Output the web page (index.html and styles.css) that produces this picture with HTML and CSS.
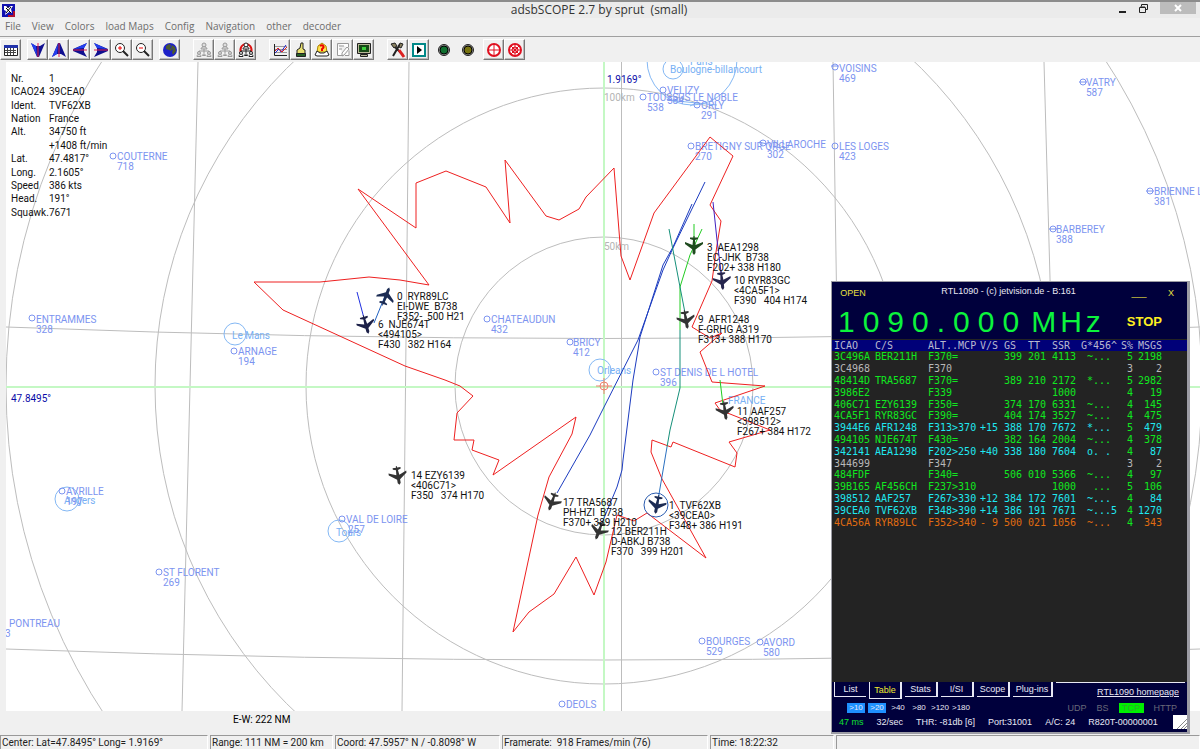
FILE: index.html
```
<!DOCTYPE html>
<html lang="en">
 <head>
  <meta charset="utf-8">
  <title>adsbSCOPE 2.7 by sprut  (small)</title>
  <meta name="viewport" content="width=device-width, initial-scale=1.0">
  <link rel="stylesheet" href="styles.css">
 </head>

<body>

<header>
  <div class="titlebar">
    <svg class="app-icon" width="13" height="13" viewBox="0 0 13 13"><path fill="#1010b0" d="M0 0h13v13H0z"/><path fill="#b01030" d="M11 7h2v6H6v-2h5z"/><path fill="#fff" d="M2 2h2l2 2 3-2h2L9 5l1 4-3-1-4 3 1-4-2-1z"/><path stroke="#000" d="M4 4l5 5M9 3L4 9M6 2v2"/></svg>
    <h1>adsbSCOPE 2.7 by sprut&nbsp; (small)</h1>
    <div class="win-buttons">
      <button type="button" aria-label="Minimize"><svg width="9" height="9"><path stroke="#222" stroke-width="2" d="M1 8h7"/></svg></button>
      <button type="button" aria-label="Restore"><svg width="9" height="9"><path fill="none" stroke="#222" d="M2.500 2.500v-2h6v5h-2M.5 3.500h6v5h-6zM1 3h5"/></svg></button>
      <button type="button" class="close" aria-label="Close"><svg width="8" height="8"><path stroke="#fff" stroke-width="2" d="M1 1l6 6M7 1L1 7"/></svg></button>
    </div>
  </div>

  <nav class="menu">
    <a href="#">File</a>
    <a href="#">View</a>
    <a href="#">Colors</a>
    <a href="#">load Maps</a>
    <a href="#">Config</a>
    <a href="#">Navigation</a>
    <a href="#">other</a>
    <a href="#">decoder</a>
  </nav>

  <div class="toolbar">
    <div class="group">
      <button type="button" aria-label="Table"><svg viewBox="0 0 16 16"><path fill="#fff" stroke="#222" d="M1.500 3.500h13v10h-13z"/><path fill="#2233aa" d="M1 3h14v3H1z"/><path stroke="#444" stroke-dasharray="2 1" d="M2 8.500h12M2 10.500h12"/><path stroke="#444" d="M4.500 6v7M7.500 6v7M10.500 6v7"/></svg></button>
    </div>
    <div class="group">
      <button type="button" aria-label="South"><svg viewBox="0 0 16 16"><path fill="#101090" d="M1 1l5 3h4l5-3-6 14H7z"/><path fill="#2440f0" d="M1 1l5 3 1 10z"/><path stroke="#e02050" d="M8 1v14"/></svg></button>
      <button type="button" aria-label="North"><svg viewBox="0 0 16 16"><path fill="#101090" d="M1 15l5-3h4l5 3L9 1H7z"/><path fill="#2440f0" d="M1 15l5-3L7 2z"/><path stroke="#e02050" d="M8 1v14"/></svg></button>
      <button type="button" aria-label="West"><svg viewBox="0 0 16 16"><path fill="#101090" d="M15 1l-3 5v4l3 5L1 9V7z"/><path fill="#2440f0" d="M15 1l-3 5-10 1z"/><path stroke="#e02050" d="M1 8h14"/></svg></button>
      <button type="button" aria-label="East"><svg viewBox="0 0 16 16"><path fill="#101090" d="M1 1l3 5v4l-3 5L15 9V7z"/><path fill="#2440f0" d="M1 1l3 5 10 1z"/><path stroke="#e02050" d="M1 8h14"/></svg></button>
      <button type="button" aria-label="Zoom in"><svg viewBox="0 0 16 16"><circle cx="6" cy="6" r="4.500" fill="#fff" stroke="#222"/><path stroke="#e00" d="M4 6h4M6 4v4"/><path stroke="#222" stroke-width="2" d="M9 9l5 5"/></svg></button>
      <button type="button" aria-label="Zoom out"><svg viewBox="0 0 16 16"><circle cx="6" cy="6" r="4.500" fill="#fff" stroke="#222"/><path stroke="#e00" d="M4 6h4"/><path stroke="#222" stroke-width="2" d="M9 9l5 5"/></svg></button>
    </div>
    <div class="group">
      <button type="button" aria-label="Globe"><svg viewBox="0 0 16 16"><circle cx="8" cy="8" r="7" fill="#1c20c8"/><path fill="#4c5a30" d="M4 4l3-2 2 1-1 3 2 1-1 2-2-1-3-1zM10 3l3 2 1 4-3 4-1-3 1-2-2-2z"/></svg></button>
    </div>
    <div class="group wide">
      <button type="button" aria-label="Network"><svg viewBox="0 0 16 16"><use href="#people" stroke="#999" fill="#ddd"/></svg></button>
      <button type="button" aria-label="Network server"><svg viewBox="0 0 16 16"><use href="#people" stroke="#999" fill="#ddd"/></svg></button>
      <button type="button" aria-label="Network client"><svg viewBox="0 0 16 16"><path fill="none" stroke="#d11" stroke-width="2" d="M3 11C1 5 5 2 8 2s7 3 5 9"/><use href="#people" stroke="#222" fill="#fff"/></svg></button>
    </div>
    <div class="group wide">
      <button type="button" aria-label="Chart"><svg viewBox="0 0 16 16"><path stroke="#999" d="M2 4.500h13M2 7.500h13M2 10.500h13"/><path fill="none" stroke="#222" d="M2.500 2v11.500H15"/><path fill="none" stroke="#22c" d="M3 11l4-4 2 3 5-7"/><path fill="none" stroke="#d22" d="M3 9l3-3 4 4 5-5"/></svg></button>
      <button type="button" aria-label="Hand"><svg viewBox="0 0 16 16"><path fill="#e8e070" stroke="#222" d="M4 12V8l3-2 1-5h2v6l2 1v4z"/><path fill="#286028" stroke="#222" d="M3.500 11.500h9v3h-9z"/></svg></button>
      <button type="button" aria-label="Alarm"><svg viewBox="0 0 16 16"><path fill="#ffe04a" stroke="#a80" d="M3 10l1-6 4-3 4 3 1 6z"/><path fill="#fff" stroke="#222" d="M1 13l2-4 3 2h4l3-2 2 4-2 1H3z"/><path stroke="#e00" stroke-width="2" fill="none" d="M6 4c3-2 5 1 2 3v2"/></svg></button>
      <button type="button" aria-label="Edit"><svg viewBox="0 0 16 16"><path fill="#fff" stroke="#999" d="M2.500 1.500h11v4M2.500 1.500v12h6M4 4h5M4 7h3M7 11l5-6 2 2-5 6-2 1zM10 13.500h4v-5"/></svg></button>
      <button type="button" aria-label="Monitor"><svg viewBox="0 0 16 16"><path fill="#b8b898" stroke="#222" d="M1.500 1.500h13v10h-13zM4.500 12.500h7v2h-7z"/><path fill="#174a17" d="M3 3h10v7H3z"/><path fill="#3cd03c" d="M6 5h4v3H6z"/></svg></button>
    </div>
    <div class="group wide">
      <button type="button" aria-label="Tools"><svg viewBox="0 0 16 16"><path stroke="#222" stroke-width="2" d="M3 3l10 10M10 2L3 14"/><path fill="#888060" stroke="#222" d="M1 2l4-1 2 3-3 2zM10 1l3 1-2 4-2-1z"/><path stroke="#d22" stroke-width="3" d="M9 8l5 7"/></svg></button>
      <button type="button" aria-label="Play"><svg viewBox="0 0 16 16"><path fill="#fff" stroke="#088" stroke-width="2" d="M2 2h12v12H2z"/><path fill="#000" d="M6 4l5 4-5 4z"/></svg></button>
    </div>
    <div class="group leds">
      <button type="button" aria-label="Server status"><svg viewBox="0 0 16 16"><circle cx="8" cy="8" r="5.500" fill="#999" stroke="#222" stroke-width="1"/><circle cx="8" cy="8" r="4" fill="#107030" stroke="#000"/></svg></button>
      <button type="button" aria-label="Decoder status"><svg viewBox="0 0 16 16"><circle cx="8" cy="8" r="5.500" fill="#999" stroke="#222" stroke-width="1"/><circle cx="8" cy="8" r="4" fill="#787410" stroke="#000"/></svg></button>
    </div>
    <div class="group">
      <button type="button" aria-label="Center"><svg viewBox="0 0 16 16"><circle cx="8" cy="8" r="6" fill="#fff" stroke="#e01020" stroke-width="2"/><path stroke="#e01020" d="M8 2v12M2 8h12"/></svg></button>
      <button type="button" aria-label="Range"><svg viewBox="0 0 16 16"><circle cx="8" cy="8" r="6" fill="#fff" stroke="#e01020" stroke-width="2"/><circle cx="8" cy="8" r="3" fill="none" stroke="#e01020"/><path stroke="#e01020" d="M8 2v12M2 8h12M4 4l8 8M12 4l-8 8"/></svg></button>
    </div>
  </div>
</header>

<main>

  <svg class="map" viewBox="6 62 1194 649" preserveAspectRatio="xMidYMid slice" role="img" aria-label="Traffic map">
    <defs>
      <g id="people"><path fill="none" d="M8 6v3M3 11V9h10v2M8 9v2"/><circle cx="8" cy="3" r="2"/><path d="M5 7c0-3 6-3 6 0z"/><circle cx="3" cy="11" r="1.500"/><circle cx="13" cy="11" r="1.500"/><path d="M1 14.500c0-3 4-3 4 0zM11 14.500c0-3 4-3 4 0zM6.500 13.500c0-2 3-2 3 0z"/></g>
      <path id="plane" d="M0-9l1.500 2v3.500L9 2v2L1.500 1 1 6l3 1v1.500H.5V10h-1V8.500H-4V7l3-1-.5-5L-9 4V2l7.500-5.500V-7z"/>
      <circle id="spot" r="3"/>
    </defs>

    <!-- grid and range rings -->
    <g class="grid">
      <path d="M198 62L182 711M409 62L402 711M621.500 62V711M833 62L843 711M1044 62L1062 711"/>
      <path d="M6 327Q603 350 1200 327M6 649Q603 671 1200 649"/>
      <circle cx="604" cy="386" r="149"/>
      <circle cx="604" cy="386" r="298"/>
      <circle cx="604" cy="386" r="449"/>
      <circle cx="604" cy="386" r="598"/>
    </g>
    <path class="cross" d="M604 62V711M6 387H1200"/>
    <text class="km" x="604" y="101">100km</text>
    <text class="km" x="604" y="250">50km</text>

    <!-- cities -->
    <g class="city">
      <circle cx="692" cy="60" r="45"/><text x="690" y="65">Paris</text>
      <circle cx="673" cy="69" r="10"/><text x="670" y="73">Boulogne-billancourt</text>
      <circle cx="235" cy="334" r="11"/><text x="232" y="339">Le Mans</text>
      <circle cx="67" cy="499" r="12"/><text x="64" y="504">Angers</text>
      <circle cx="339" cy="531" r="11"/><text x="336" y="536">Tours</text>
      <circle cx="600" cy="370" r="11"/><text x="597" y="374">Orleans</text>
      <text x="728" y="404">FRANCE</text>
      <path d="M667 100l50 5M690 106l8-4"/>
    </g>

    <!-- airfields -->
    <g class="field">
      <use href="#spot" x="32" y="318"/><text x="36" y="323">ENTRAMMES</text><text x="36" y="333">328</text>
      <use href="#spot" x="113" y="156"/><text x="117" y="160">COUTERNE</text><text x="117" y="170">718</text>
      <use href="#spot" x="234" y="351"/><text x="238" y="355">ARNAGE</text><text x="238" y="365">194</text>
      <use href="#spot" x="487" y="319"/><text x="491" y="323">CHATEAUDUN</text><text x="491" y="333">432</text>
      <use href="#spot" x="62" y="491"/><text x="66" y="495">AVRILLE</text><text x="66" y="505">197</text>
      <use href="#spot" x="159" y="572"/><text x="163" y="576">ST FLORENT</text><text x="163" y="586">269</text>
      <text x="9" y="627">PONTREAU</text><text x="5" y="637">3</text>
      <use href="#spot" x="570" y="342"/><text x="573" y="346">BRICY</text><text x="573" y="356">412</text>
      <use href="#spot" x="656" y="372"/><text x="660" y="376">ST DENIS DE L HOTEL</text><text x="660" y="386">396</text>
      <use href="#spot" x="342" y="519"/><text x="346" y="523">VAL DE LOIRE</text><text x="348" y="533">257</text>
      <use href="#spot" x="702" y="641"/><text x="706" y="645">BOURGES</text><text x="706" y="655">529</text>
      <use href="#spot" x="760" y="642"/><text x="763" y="646">AVORD</text><text x="763" y="656">580</text>
      <use href="#spot" x="562" y="704"/><text x="566" y="708">DEOLS</text>
      <use href="#spot" x="663" y="90"/><text x="667" y="94">VELIZY</text><text x="667" y="104">584</text>
      <use href="#spot" x="643" y="97"/><text x="647" y="101">TOUSSUS LE NOBLE</text><text x="647" y="111">538</text>
      <use href="#spot" x="697" y="105"/><text x="701" y="109">ORLY</text><text x="701" y="119">291</text>
      <use href="#spot" x="691" y="146"/><text x="695" y="150">BRETIGNY SUR ORGE</text><text x="695" y="160">270</text>
      <use href="#spot" x="763" y="143"/><text x="767" y="148">VILLAROCHE</text><text x="767" y="158">302</text>
      <use href="#spot" x="835" y="67"/><text x="839" y="72">VOISINS</text><text x="839" y="82">469</text>
      <use href="#spot" x="835" y="146"/><text x="839" y="150">LES LOGES</text><text x="839" y="160">423</text>
      <use href="#spot" x="1083" y="82"/><text x="1086" y="86">VATRY</text><text x="1086" y="96">587</text>
      <use href="#spot" x="1053" y="229"/><text x="1056" y="233">BARBEREY</text><text x="1056" y="243">388</text>
      <use href="#spot" x="1150" y="191"/><text x="1154" y="195">BRIENNE L</text><text x="1154" y="205">381</text>
      <path d="M1079 82h8M1049 229h8M1146 191h8M759 142l8 2M831 66h8"/>
    </g>

    <!-- maximum range outline -->
    <polygon class="range" points="254,282 320,282 369,277 400,280 429,285 358,189 416,228 416,183 446,171 486,187 510,223 505,160 546,216 559,220 579,209 586,197 614,168 621,256 630,280 654,213 710,137 733,156 710,205 721,221 717,245 712,281 692,327 710,338 722,333 700,352 712,382 765,386 715,403 720,410 770,430 729,442 737,453 735,467 673,442 671,447 652,440 651,452 662,479 706,558 647,513 634,521 617,515 606,562 594,595 576,557 554,594 529,612 513,632 538,515 549,477 572,434 576,417 493,475 499,460 472,450 474,440 454,440 457,413 473,396 460,386 445,380 405,366 283,310"/>

    <!-- tracks -->
    <g class="tracks">
      <path stroke="#1c3cc0" d="M705 182L673 248 663 270 638 340 600 415 590 435 557 493M692 204L673 247 663 265 640 337 638 350 633 380 623 460 622 470 617 487 602 523"/>
      <path stroke="#22cc22" d="M694 224V246M702 229L690 255 680 287V330M720 380L723 405"/>
      <path stroke="#16907a" d="M669 229L680 287 686 318M680 330V388L670 430 667 447"/>
      <path stroke="#2a70c0" d="M667 447L658 500"/>
      <path stroke="#4020c0" d="M713 202L717 240 722 280"/>
      <path stroke="#2030e0" d="M357 292L365 322"/>
      <path stroke="#2060c0" d="M385 296L374 323"/>
    </g>
    <g class="home"><circle cx="604" cy="386" r="4"/><path d="M596 386h16M604 378v16"/></g>

    <!-- aircraft -->
    <g class="planes">
      <use href="#plane" fill="#1c2c54" transform="translate(386 296) rotate(21)"/>
      <use href="#plane" fill="#1c2048" transform="translate(366 325) rotate(164)"/>
      <use href="#plane" fill="#1e4a1e" transform="translate(694 246) rotate(180)"/>
      <use href="#plane" fill="#26264e" transform="translate(722 281) rotate(174)"/>
      <use href="#plane" transform="translate(686 320) rotate(170)"/>
      <use href="#plane" transform="translate(725 411) rotate(172)"/>
      <use href="#plane" transform="translate(398 476) rotate(170)"/>
      <use href="#plane" transform="translate(552 502) rotate(200)"/>
      <use href="#plane" transform="translate(599 531) rotate(201)"/>
      <use href="#plane" fill="#1c2c54" transform="translate(657 505) rotate(191)"/>
      <circle cx="656" cy="505" r="12"/>
    </g>
    <g class="tags">
      <text><tspan x="397" y="300">0  RYR89LC</tspan><tspan x="397" y="310">EI-DWE  B738</tspan><tspan x="397" y="320">F352-  500 H21</tspan></text>
      <text><tspan x="378" y="328">6  NJE674T</tspan><tspan x="378" y="338">&lt;494105&gt;</tspan><tspan x="378" y="348">F430   382 H164</tspan></text>
      <text><tspan x="707" y="251">3  AEA1298</tspan><tspan x="707" y="261">EC-JHK  B738</tspan><tspan x="707" y="271">F202+ 338 H180</tspan></text>
      <text><tspan x="734" y="284">10 RYR83GC</tspan><tspan x="734" y="294">&lt;4CA5F1&gt;</tspan><tspan x="734" y="304">F390   404 H174</tspan></text>
      <text><tspan x="698" y="323">9  AFR1248</tspan><tspan x="698" y="333">F-GRHG A319</tspan><tspan x="698" y="343">F313+ 388 H170</tspan></text>
      <text><tspan x="737" y="415">11 AAF257</tspan><tspan x="737" y="425">&lt;398512&gt;</tspan><tspan x="737" y="435">F267+ 384 H172</tspan></text>
      <text><tspan x="411" y="479">14 EZY6139</tspan><tspan x="411" y="489">&lt;406C71&gt;</tspan><tspan x="411" y="499">F350   374 H170</tspan></text>
      <text><tspan x="563" y="506">17 TRA5687</tspan><tspan x="563" y="516">PH-HZI  B738</tspan><tspan x="563" y="526">F370+ 389 H210</tspan></text>
      <text><tspan x="611" y="535">12 BER211H</tspan><tspan x="611" y="545">D-ABKJ B738</tspan><tspan x="611" y="555">F370   399 H201</tspan></text>
      <text><tspan x="669" y="509">1  TVF62XB</tspan><tspan x="669" y="519">&lt;39CEA0&gt;</tspan><tspan x="669" y="529">F348+ 386 H191</tspan></text>
    </g>
    <g class="axis"><text x="607" y="83">1.9169°</text><text x="11" y="402">47.8495°</text></g>
  </svg>

  <dl class="info">
    <dt>Nr.</dt><dd>1</dd>
    <dt>ICAO24</dt><dd>39CEA0</dd>
    <dt>Ident.</dt><dd>TVF62XB</dd>
    <dt>Nation</dt><dd>France</dd>
    <dt>Alt.</dt><dd>34750 ft</dd>
    <dd>+1408 ft/min</dd>
    <dt>Lat.</dt><dd>47.4817°</dd>
    <dt>Long.</dt><dd>2.1605°</dd>
    <dt>Speed</dt><dd>386 kts</dd>
    <dt>Head.</dt><dd>191°</dd>
    <dt>Squawk.</dt><dd>7671</dd>
  </dl>

</main>

<p class="scale">E-W: 222 NM</p>

<footer>
  <p>Center: Lat=47.8495° Long= 1.9169°</p>
  <p>Range: 111 NM = 200 km</p>
  <p>Coord: 47.5957° N / -0.8098° W</p>
  <p>Framerate:&nbsp; 918 Frames/min (76)</p>
  <p>Time: 18:22:32</p>
  <p></p>
</footer>

<section class="rtl">
  <div class="rtl-title">
    <button type="button">OPEN</button>
    <h2>RTL1090 - (c) jetvision.de - B:161</h2>
    <button type="button" aria-label="Minimize decoder">___</button>
    <button type="button">X</button>
  </div>
  <div class="rtl-freq">
    <span class="number">1090.000</span>
    <span class="unit">MHz</span>
    <button type="button">STOP</button>
  </div>

  <div class="rtl-body">
    <table>
      <colgroup>
        <col class="c-icao"><col class="c-cs"><col class="c-alt"><col class="c-num"><col class="c-num"><col class="c-num"><col class="c-ssr"><col class="c-g"><col class="c-s"><col class="c-msgs"><col>
      </colgroup>
      <thead>
        <tr><th>ICAO</th><th>C/S</th><th>ALT..MCP</th><th>V/S</th><th>GS</th><th>TT</th><th>SSR</th><th>G*456^</th><th>S%</th><th>MSGS</th><th></th></tr>
      </thead>
      <tbody>
        <tr><td>3C496A</td><td>BER211H</td><td>F370=</td><td></td><td>399</td><td>201</td><td>4113</td><td> ~...</td><td>5</td><td>2198</td></tr>
        <tr class="idle"><td>3C4968</td><td></td><td>F370</td><td></td><td></td><td></td><td></td><td></td><td>3</td><td>2</td></tr>
        <tr><td>48414D</td><td>TRA5687</td><td>F370=</td><td></td><td>389</td><td>210</td><td>2172</td><td> *...</td><td>5</td><td>2982</td></tr>
        <tr><td>3986E2</td><td></td><td>F339</td><td></td><td></td><td></td><td>1000</td><td></td><td>4</td><td>19</td></tr>
        <tr><td>406C71</td><td>EZY6139</td><td>F350=</td><td></td><td>374</td><td>170</td><td>6331</td><td> ~...</td><td>4</td><td>145</td></tr>
        <tr><td>4CA5F1</td><td>RYR83GC</td><td>F390=</td><td></td><td>404</td><td>174</td><td>3527</td><td> ~...</td><td>4</td><td>475</td></tr>
        <tr class="moving"><td>3944E6</td><td>AFR1248</td><td>F313&gt;370</td><td>+15</td><td>388</td><td>170</td><td>7672</td><td> *...</td><td>5</td><td>479</td></tr>
        <tr><td>494105</td><td>NJE674T</td><td>F430=</td><td></td><td>382</td><td>164</td><td>2004</td><td> ~...</td><td>4</td><td>378</td></tr>
        <tr class="moving"><td>342141</td><td>AEA1298</td><td>F202&gt;250</td><td>+40</td><td>338</td><td>180</td><td>7604</td><td> o. .</td><td>4</td><td>87</td></tr>
        <tr class="idle"><td>344699</td><td></td><td>F347</td><td></td><td></td><td></td><td></td><td></td><td>3</td><td>2</td></tr>
        <tr><td>484FDF</td><td></td><td>F340=</td><td></td><td>506</td><td>010</td><td>5366</td><td> ~...</td><td>4</td><td>97</td></tr>
        <tr><td>39B165</td><td>AF456CH</td><td>F237&gt;310</td><td></td><td></td><td></td><td>1000</td><td>  ...</td><td>5</td><td>106</td></tr>
        <tr class="moving"><td>398512</td><td>AAF257</td><td>F267&gt;330</td><td>+12</td><td>384</td><td>172</td><td>7601</td><td> ~...</td><td>4</td><td>84</td></tr>
        <tr class="moving"><td>39CEA0</td><td>TVF62XB</td><td>F348&gt;390</td><td>+14</td><td>386</td><td>191</td><td>7671</td><td> ~...5</td><td>4</td><td>1270</td></tr>
        <tr class="down"><td>4CA56A</td><td>RYR89LC</td><td>F352&gt;340</td><td>- 9</td><td>500</td><td>021</td><td>1056</td><td> ~...</td><td>4</td><td>343</td></tr>
      </tbody>
    </table>
  </div>

  <div class="rtl-tabs">
    <button type="button">List</button>
    <button type="button" class="active">Table</button>
    <button type="button">Stats</button>
    <button type="button">I/SI</button>
    <button type="button">Scope</button>
    <button type="button">Plug-ins</button>
    <div class="home-link"><a href="#">RTL1090 homepage</a></div>
  </div>
  <div class="rtl-filters">
    <button type="button" class="on">&gt;10</button>
    <button type="button" class="on">&gt;20</button>
    <button type="button">&gt;40</button>
    <button type="button">&gt;80</button>
    <button type="button">&gt;120</button>
    <button type="button">&gt;180</button>
    <div class="ports"><span>UDP</span><span>BS</span><span class="tcp">TCP</span><span>HTTP</span></div>
  </div>
  <div class="rtl-status">
    <span class="ok">47 ms</span><span>32/sec</span><span>THR: -81db [6]</span><span>Port:31001</span><span>A/C: 24</span><span>R820T-00000001</span>
    <svg class="grip" width="14" height="14"><path fill="#fff" d="M0 0h14v14H0z"/><path stroke="#888" d="M4 14L14 4M8 14l6-6M11 14l3-3"/></svg>
  </div>
</section>

</body>
</html>
```
FILE: styles.css
```
* {
  box-sizing: border-box;
}

body {
  display: flex;
  flex-direction: column;
  position: relative;
  height: 100vh;
  margin: 0;
  overflow: hidden;
  background: #f0f0f0;
  font-family: "Open Sans", "Noto Sans", sans-serif;
  font-size: 10px;
}

h1, h2, p, dl, dd {
  margin: 0;
  font-weight: normal;
}

button {
  margin: 0;
  padding: 0;
  border: 0;
  background: none;
  color: inherit;
  font: inherit;
}

/* Window frame */
.titlebar {
  display: grid;
  grid-template-columns: 1fr auto 1fr;
  align-items: center;
  height: 18px;
  padding: 0 4px 0 2px;
  border-top: 2px solid #8c8c8c;
  background: #ebebeb;
}

.titlebar h1 {
  font-size: 12px;
  line-height: 16px;
  color: #333;
}

.win-buttons {
  display: flex;
  justify-content: flex-end;
  gap: 12px;
  align-self: start;
}

.win-buttons button {
  height: 12px;
  line-height: 0;
}

.win-buttons .close {
  width: 36px;
  background: #bcbcbc;
}

.menu {
  display: flex;
  gap: 11px;
  height: 19px;
  padding: 0 5px;
  border-bottom: 1px solid #a0a0a0;
  line-height: 17px;
}

.menu a {
  color: #6d6d6d;
  text-decoration: none;
}

.toolbar {
  display: flex;
  gap: 6px;
  height: 25px;
  padding-top: 2px;
}

.group {
  display: flex;
}

.wide {
  margin-left: 7px;
}

.group button {
  display: flex;
  align-items: center;
  justify-content: center;
  width: 21px;
  height: 21px;
  border: 1px solid;
  border-color: #fff #777 #777 #fff;
  box-shadow: inset -1px -1px #bbb;
}

.group svg {
  width: 16px;
  height: 16px;
}

.leds {
  gap: 6px;
}

.leds button {
  width: 18px;
  border: 0;
  box-shadow: none;
}

/* Map */
main {
  flex: 1;
  position: relative;
  min-height: 0;
  margin-left: 6px;
  background: #fff;
}

.map {
  display: block;
  width: 100%;
  height: 100%;
  font-family: Roboto, "Liberation Sans", sans-serif;
  font-size: 10px;
}

.grid {
  fill: none;
  stroke: #bdbdbd;
}

.cross {
  stroke: #c4f8c4;
  stroke-width: 2;
}

.km {
  fill: #b4b4b4;
}

.city {
  fill: none;
  stroke: #84b8f4;
}

.city text {
  fill: #78b0f4;
  stroke: none;
}

.field {
  fill: none;
  stroke: #7c94f0;
}

.field text {
  fill: #7c94f0;
  stroke: none;
}

.range {
  fill: none;
  stroke: #ee2020;
}

.tracks {
  fill: none;
}

.home {
  fill: none;
  stroke: #f08070;
}

.planes {
  fill: #333;
}

.planes circle {
  fill: none;
  stroke: #2a5cb0;
}

.tags text {
  fill: #111;
  white-space: pre;
}

.axis {
  fill: #0a0aa8;
}

.info {
  display: grid;
  grid-template-columns: 38px auto;
  grid-auto-rows: 1fr;
  position: absolute;
  top: 10px;
  left: 5px;
  height: 147px;
  font-family: Roboto, "Liberation Sans", sans-serif;
  line-height: 13px;
  color: #111;
}

.info dd {
  grid-column: 2;
}

.scale {
  height: 24px;
  padding: 2px 233px;
  font-family: Roboto, "Liberation Sans", sans-serif;
  line-height: 14px;
}

/* Status bar */
footer {
  display: grid;
  grid-template-columns: 208px 123px 165px 206px 124px 1fr;
  gap: 2px;
  height: 14px;
  font-family: Roboto, "Liberation Sans", sans-serif;
  line-height: 14px;
  color: #222;
}

footer p {
  padding-left: 1px;
  border: 1px solid;
  border-color: #999 #fff #fff #999;
  white-space: nowrap;
}

/* Decoder window */
.rtl {
  display: flex;
  flex-direction: column;
  position: absolute;
  right: 10px;
  bottom: 15px;
  width: 359px;
  height: 453px;
  border: solid #9c9ca4;
  border-width: 1px 3px 2px 1px;
  background: #00003c;
  font-family: "Liberation Sans", Arial, sans-serif;
  font-size: 9px;
  color: #e8e8f4;
}

.rtl-title {
  display: grid;
  grid-template-columns: 42px 1fr 32px 32px;
  height: 22px;
  line-height: 20px;
  text-align: center;
  color: #e8e040;
}

.rtl-title h2 {
  padding-left: 20px;
  font-size: 9px;
  line-height: 18px;
  color: #e8e8f4;
}

.rtl-freq {
  display: flex;
  align-items: center;
  gap: 4px;
  height: 35px;
  padding: 0 25px 0 6px;
  font-size: 30px;
  line-height: 30px;
  color: #0cf43c;
}

.number {
  letter-spacing: 8px;
}

.unit {
  letter-spacing: 4px;
}

.rtl-freq button {
  margin-left: auto;
  font-size: 13px;
  font-weight: bold;
  color: #fff020;
}

.rtl-body {
  flex: 1;
  padding-top: 1px;
  background: #232323;
}

.rtl table {
  width: 100%;
  height: 188px;
  table-layout: fixed;
  border-collapse: collapse;
  font-family: "DejaVu Sans Mono", monospace;
  font-size: 10px;
  line-height: 11px;
  color: #10e820;
}

.rtl th, .rtl td {
  padding: 0;
  font-weight: normal;
  text-align: left;
  white-space: pre;
}

.rtl th:first-child, .rtl td:first-child {
  padding-left: 2px;
}

.rtl thead {
  background: #000078;
  color: #b8b8d0;
}

.rtl td:nth-child(9) {
  padding-left: 6px;
}

.rtl th:nth-child(10), .rtl td:nth-child(10) {
  text-align: right;
}

.c-icao { width: 43px; }
.c-cs { width: 53px; }
.c-alt { width: 52px; }
.c-num { width: 24px; }
.c-ssr { width: 29px; }
.c-g { width: 40px; }
.c-s { width: 17px; }
.c-msgs { width: 24px; }

.rtl .idle {
  color: #b8b8b8;
}

.rtl .moving {
  color: #20e8f0;
}

.moving td:nth-child(9), .down td:nth-child(9) {
  color: #10e820;
}

.rtl .down {
  color: #e06c10;
}

.rtl-tabs {
  display: flex;
  gap: 3px;
  height: 18px;
  padding: 0 2px;
}

.rtl-tabs button {
  width: 33px;
  height: 15px;
  border: solid #e8e8f4;
  border-width: 0 2px 1px 0;
}

.rtl-tabs button:first-child {
  width: 32px;
  border-width: 0 0 1px 1px;
}

.rtl-tabs .active {
  height: 17px;
  border-left-width: 1px;
  color: #f0e830;
}

.rtl-tabs button:nth-child(6) {
  width: 40px;
}

.home-link {
  flex: 1;
  padding: 4px 6px;
  border-top: 1px solid #e8e8f4;
  text-align: right;
}

.rtl a {
  color: inherit;
}

.rtl-filters {
  display: flex;
  align-items: center;
  gap: 3px;
  height: 15px;
  padding: 0 10px 0 15px;
  font-size: 8px;
}

.rtl-filters button {
  width: 18px;
  height: 10px;
  line-height: 10px;
}

.rtl-filters .on {
  background: #1e90ff;
}

.ports {
  display: flex;
  gap: 10px;
  margin-left: auto;
  font-size: 9px;
  color: #686878;
}

.ports .tcp {
  width: 25px;
  background: #00f000;
  color: #30a830;
  line-height: 10px;
  text-align: center;
}

.rtl-status {
  display: flex;
  gap: 13px;
  height: 17px;
  padding-left: 7px;
  line-height: 15px;
  white-space: nowrap;
}

.ok {
  color: #10e030;
}

.grip {
  margin-left: auto;
}
```
